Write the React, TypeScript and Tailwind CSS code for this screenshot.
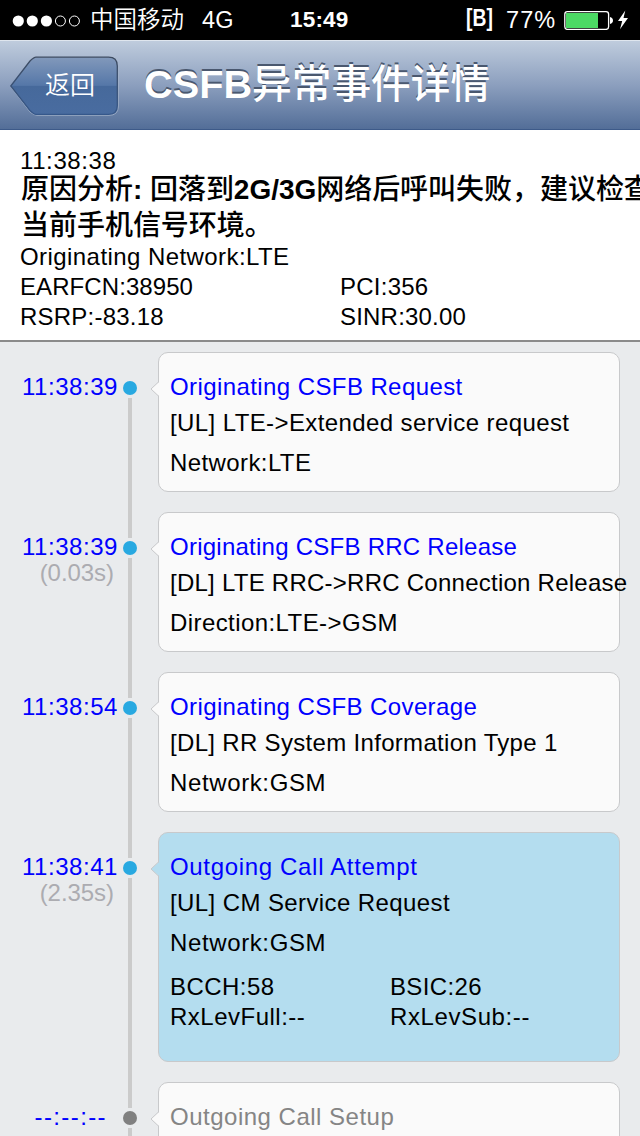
import type { ReactNode } from "react";

type Label = { text: string; spacing: string };

type EventItem = {
  time: string;
  delta?: string;
  title: Label;
  lines: Label[];
  pairs?: [Label, Label][];
  highlighted?: boolean;
  pending?: boolean;
};

const events: EventItem[] = [
  {
    time: "11:38:39",
    title: { text: "Originating CSFB Request", spacing: "tracking-[0.41px]" },
    lines: [
      { text: "[UL] LTE->Extended service request", spacing: "tracking-[0.4px]" },
      { text: "Network:LTE", spacing: "tracking-[0.4px]" },
    ],
  },
  {
    time: "11:38:39",
    delta: "(0.03s)",
    title: { text: "Originating CSFB RRC Release", spacing: "tracking-[0.25px]" },
    lines: [
      { text: "[DL] LTE RRC->RRC Connection Release", spacing: "tracking-[0.25px]" },
      { text: "Direction:LTE->GSM", spacing: "tracking-[0.42px]" },
    ],
  },
  {
    time: "11:38:54",
    title: { text: "Originating CSFB Coverage", spacing: "tracking-[0.39px]" },
    lines: [
      { text: "[DL] RR System Information Type 1", spacing: "tracking-[0.32px]" },
      { text: "Network:GSM", spacing: "tracking-[0.62px]" },
    ],
  },
  {
    time: "11:38:41",
    delta: "(2.35s)",
    title: { text: "Outgoing Call Attempt", spacing: "tracking-[0.67px]" },
    lines: [
      { text: "[UL] CM Service Request", spacing: "tracking-[0.4px]" },
      { text: "Network:GSM", spacing: "tracking-[0.62px]" },
    ],
    pairs: [
      [
        { text: "BCCH:58", spacing: "tracking-[0.45px]" },
        { text: "BSIC:26", spacing: "tracking-[0.35px]" },
      ],
      [
        { text: "RxLevFull:--", spacing: "tracking-[0.5px]" },
        { text: "RxLevSub:--", spacing: "tracking-[0.6px]" },
      ],
    ],
    highlighted: true,
  },
  {
    time: "--:--:--",
    title: { text: "Outgoing Call Setup", spacing: "tracking-[0.5px]" },
    lines: [],
    pending: true,
  },
];

function StatusBar() {
  return (
    <div className="flex h-10 shrink-0 items-center bg-black text-[24px] leading-[40px] text-white">
      <svg className="ml-3 mt-px h-3 w-[70px] shrink-0" viewBox="0 0 70 12" fill="none" stroke="white">
        <circle cx="6.3" cy="6" r="5.6" fill="white" stroke="none" />
        <circle cx="20.3" cy="6" r="5.6" fill="white" stroke="none" />
        <circle cx="34.4" cy="6" r="5.6" fill="white" stroke="none" />
        <circle cx="48.4" cy="6" r="5" />
        <circle cx="62.4" cy="6" r="5" />
      </svg>
      <span className="ml-[8px] w-[112px] shrink-0 text-[23.5px] font-[350]">中国移动</span>
      <span className="w-[88px] shrink-0 text-[23.500px] tracking-[0.3px]">4G</span>
      <span className="w-[176px] shrink-0 text-[22.5px] font-bold tracking-[0.2px]">15:49</span>
      <span className="w-[40px] shrink-0 pb-[4px] text-[23px] leading-[36px] font-bold">
        <span className="inline-block origin-left scale-x-[0.84]">[B]</span>
      </span>
      <span className="w-[58px] shrink-0 text-[23.500px] tracking-[1.100px]">77%</span>
      <svg className="h-5 w-[66px] shrink-0" viewBox="564 10 66 20">
        <rect x="564.8" y="11.6" width="43.8" height="17.8" rx="2.6" fill="none" stroke="white" strokeWidth="1.3" />
        <rect x="566" y="13" width="32" height="15" fill="#4cd964" />
        <path d="M610 17c1.8.3 3 1.6 3 3.5s-1.2 3.2-3 3.5Z" fill="white" />
        <path d="M625.3 10.5 618 21h4.2l-2.2 8.3 8-11.2h-4.5Z" fill="white" />
      </svg>
    </div>
  );
}

function NavBar() {
  return (
    <div className="flex h-[90px] shrink-0 border-t border-b border-t-[#dfe6ee] border-b-[#3d5a89] bg-linear-to-b from-[#bfccdd] via-[#8c9fbe] to-[#536e98]">
      <button className="relative mt-[14px] ml-[9px] h-[62px] w-[110px] shrink-0 pl-[36px] text-left text-[25px] leading-[60px] font-[350] text-white">
        <svg className="absolute inset-0 h-[62px] w-[110px]" viewBox="9 55 110 62" fill="none">
          <defs>
            <linearGradient id="back" x1="0" y1="57" x2="0" y2="115" gradientUnits="userSpaceOnUse">
              <stop offset="0" stopColor="#8299bb" />
              <stop offset="0.49" stopColor="#5577a8" />
              <stop offset="0.5" stopColor="#46699b" />
              <stop offset="1" stopColor="#496ca0" />
            </linearGradient>
            <linearGradient id="rim" x1="0" y1="57" x2="0" y2="115" gradientUnits="userSpaceOnUse">
              <stop offset="0" stopColor="#3d4b60" />
              <stop offset="1" stopColor="#36588b" />
            </linearGradient>
          </defs>
          <path d="M11 87 30 112Q34 115.300 37 115.300H109Q118 115.300 118.300 107V67" stroke="#a5b4cb" strokeOpacity="0.8" />
          <path d="M10.8 86 30 61Q34 57.2 36 57.2H108.5Q117.3 57.2 117.3 66V105.5Q117.3 114.3 108.5 114.3H36Q34 114.3 30 110.5Z" fill="url(#back)" stroke="url(#rim)" strokeWidth="1.3" />
        </svg>
        <span className="relative -top-px">返回</span>
      </button>
      <h1 className="ml-[25px] text-[39.700px] leading-[87px] font-medium whitespace-nowrap text-white [text-shadow:0_-2px_0_#4a586f]">
        <span className="font-bold">CSFB</span>异常事件详情
      </h1>
    </div>
  );
}

function Pair({ left, right, width }: { left: Label; right: Label; width: string }) {
  return (
    <div className="flex">
      <span className={`${width} ${left.spacing} shrink-0`}>{left.text}</span>
      <span className={right.spacing}>{right.text}</span>
    </div>
  );
}

function Summary() {
  return (
    <section className="h-[212px] shrink-0 border-b-2 border-[#8b8b8b] bg-white pt-4 pl-5 whitespace-nowrap">
      <p className="h-[26px] tracking-[0.6px]">11:38:38</p>
      <p className="-mb-[2px] pl-px text-[28px] leading-[36px] font-medium tracking-[-0.03px]">
        原因分析<b>: </b>回落到<b>2G/3G</b>网络后呼叫失败，建议检查
        <br />
        当前手机信号环境。
      </p>
      <p className="tracking-[0.43px]">Originating Network:LTE</p>
      <Pair
        left={{ text: "EARFCN:38950", spacing: "tracking-[0.08px]" }}
        right={{ text: "PCI:356", spacing: "tracking-[0.25px]" }}
        width="w-[320px]"
      />
      <Pair
        left={{ text: "RSRP:-83.18", spacing: "tracking-[0.22px]" }}
        right={{ text: "SINR:30.00", spacing: "tracking-[0.2px]" }}
        width="w-[320px]"
      />
    </section>
  );
}

function Card({ highlighted, children }: { highlighted?: boolean; children: ReactNode }) {
  return (
    <div
      className={`relative w-[462px] rounded-[10px] border border-[#c8c9cb] pt-[19px] pl-[11px] whitespace-nowrap ${
        highlighted ? "h-[230px] bg-[#b4ddef]" : "h-[140px] bg-[#fafafa]"
      }`}
    >
      <svg className="absolute top-[27px] -left-[9px] h-[18px] w-[10px]" viewBox="0 0 10 18">
        <path d="M10 1 1 9l9 8" fill={highlighted ? "#b4ddef" : "#fafafa"} />
        <path d="M9 1.5 1 9l8 7.5" fill="none" stroke="#c8c9cb" />
      </svg>
      {children}
    </div>
  );
}

function EventRow({ event, first }: { event: EventItem; first: boolean }) {
  return (
    <li className="flex shrink-0">
      <div className="w-[118px] pt-[30px] text-right">
        <p className={event.pending ? "pr-[11px] tracking-[1.4px] text-[#0000ff]" : "tracking-[0.55px] text-[#0000ff]"}>
          {event.time}
        </p>
        {event.delta && <p className="-mt-1 pr-[4px] tracking-[-0.05px] text-[#acacb1]">{event.delta}</p>}
      </div>
      <div className="flex w-6 flex-col items-center">
        <span className={`h-9 w-1 ${first ? "" : "bg-[#cbcbcb]"}`} />
        <span className="flex h-5 items-center">
          <span className={`size-[14px] rounded-full ${event.pending ? "bg-[#808080]" : "bg-[#29a9e1]"}`} />
        </span>
        <span className="w-1 flex-1 bg-[#cbcbcb]" />
      </div>
      <div className="py-[10px] pl-4">
        <Card highlighted={event.highlighted}>
          <h2 className={`${event.title.spacing} ${event.pending ? "text-[#858585]" : "text-[#0000ff]"}`}>
            {event.title.text}
          </h2>
          <div className="mt-[6px] flex flex-col gap-[10px]">
            {event.lines.map((line) => (
              <p key={line.text} className={line.spacing}>
                {line.text}
              </p>
            ))}
          </div>
          {event.pairs && (
            <div className="mt-[14px]">
              {event.pairs.map(([left, right]) => (
                <Pair key={left.text} left={left} right={right} width="w-[220px]" />
              ))}
            </div>
          )}
        </Card>
      </div>
    </li>
  );
}

export default function App() {
  return (
    <main className="flex h-[1136px] w-[640px] flex-col overflow-hidden bg-[#e9ebed] font-['Liberation_Sans','Noto_Sans_CJK_SC',sans-serif] text-[24px] leading-[30px] tracking-[0.5px] text-black">
      <div className="shrink-0 tracking-normal">
        <StatusBar />
        <NavBar />
      </div>
      <Summary />
      <ol className="flex flex-col">
        {events.map((event, index) => (
          <EventRow key={index} event={event} first={index === 0} />
        ))}
      </ol>
    </main>
  );
}
